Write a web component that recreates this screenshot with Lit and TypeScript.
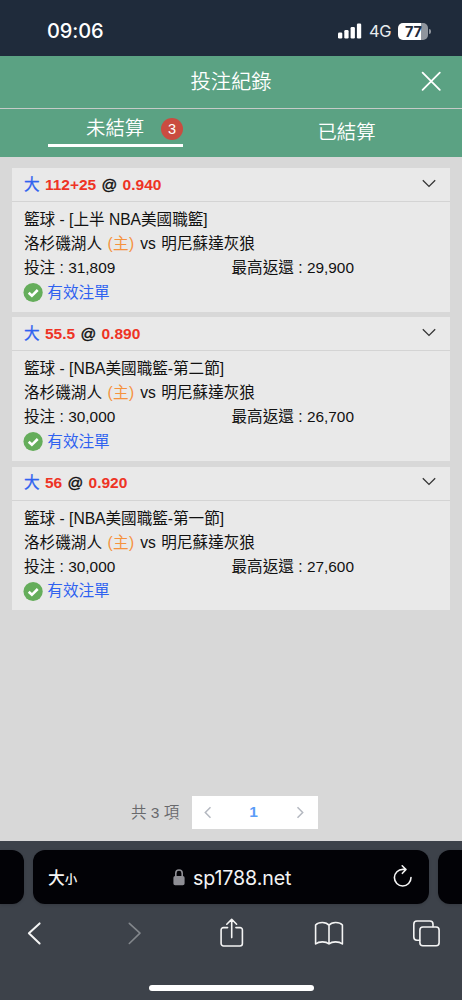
import { LitElement, html, css } from "lit";
import { customElement, property } from "lit/decorators.js";

interface Bet {
  line: string;
  odds: string;
  league: string;
  stake: string;
  payout: string;
}

const BETS: Bet[] = [
  { line: "112+25", odds: "0.940", league: "[上半 NBA美國職籃]", stake: "31,809", payout: "29,900" },
  { line: "55.5", odds: "0.890", league: "[NBA美國職籃-第二節]", stake: "30,000", payout: "26,700" },
  { line: "56", odds: "0.920", league: "[NBA美國職籃-第一節]", stake: "30,000", payout: "27,600" },
];

@customElement("status-bar")
class StatusBar extends LitElement {
  static styles = css`
    :host { display: flex; box-sizing: border-box; height: 55.5px; padding: 7px 31px 0 47px; align-items: center; justify-content: space-between; background: #1f2b3b; color: #fff; font-family: Inter, sans-serif; }
    .time { font-size: 20px; font-weight: 500; letter-spacing: -0.1px; line-height: 24px; }
    .right { display: flex; align-items: center; }
    .net { font-size: 16.4px; line-height: 20px; margin: 0 7px 0 7px; color: #e9ebee; letter-spacing: -0.2px; }
    .battery { display: flex; align-items: center; }
    .cell { width: 30px; height: 17px; border-radius: 5px; background: linear-gradient(90deg, #fff 77%, #8f959d 77%); color: #1f2b3b; font-size: 14.5px; font-weight: 700; line-height: 17.5px; text-align: center; letter-spacing: -0.2px; }
    .nub { width: 1.6px; height: 5px; margin-left: 1px; border-radius: 0 2px 2px 0; background: #8f959d; }
    svg { display: block; }
  `;
  render() {
    return html`
      <span class="time">09:06</span>
      <div class="right">
        <svg width="24" height="16" viewBox="0 0 24 16" fill="#fff">
          <rect x="0" y="9.5" width="4.3" height="6" rx="1.2" />
          <rect x="6.3" y="7" width="4.3" height="8.5" rx="1.2" />
          <rect x="12.6" y="4" width="4.3" height="11.5" rx="1.2" />
          <rect x="18.9" y="0.5" width="4.3" height="15" rx="1.2" />
        </svg>
        <span class="net">4G</span>
        <div class="battery"><div class="cell">77</div><div class="nub"></div></div>
      </div>
    `;
  }
}

@customElement("bet-card")
class BetCard extends LitElement {
  @property({ attribute: false }) bet!: Bet;
  static styles = css`
    :host { display: block; height: 143.5px; background: #e9e9e9; color: #111; font-size: 15.6px; }
    .head { display: flex; box-sizing: border-box; height: 34px; padding: 0 13px 0 12px; align-items: center; justify-content: space-between; border-bottom: 1.5px solid #d4d4d4; }
    .title { font-size: 15.5px; font-weight: 700; line-height: 24px; white-space: pre; word-spacing: 1px; }
    .pick { color: #2f62f0; font-size: 15.6px; font-weight: 400; -webkit-text-stroke: 0.3px #2f62f0; }
    .red { color: #ee3325; }
    .at { font-weight: 400; -webkit-text-stroke: 0.4px #111; }
    .body { padding: 6px 12px 0; }
    .row { display: flex; height: 24px; line-height: 24px; white-space: pre; }
    .match { word-spacing: 1.3px; }
    .home { color: #f5923e; letter-spacing: 0.3px; }
    .latin { font-size: 15.4px; }
    .half { width: 207.5px; }
    .valid { color: #2f62f0; align-items: center; gap: 4.3px; height: 25px; }
    svg { display: block; overflow: visible; }
  `;
  render() {
    const b = this.bet;
    return html`
      <div class="head">
        <div class="title"><span class="pick">大</span><span class="red"> ${b.line} </span><span class="at">@</span><span class="red"> ${b.odds}</span></div>
        <svg width="16" height="12" viewBox="0 0 16 12" fill="none" stroke="#333" stroke-width="1.3"><path d="M1.8 1.3 8 7.4 14.2 1.3" /></svg>
      </div>
      <div class="body">
        <div class="row">籃球 - ${b.league}</div>
        <div class="row match">洛杉磯湖人 <span class="home">(主)</span> vs 明尼蘇達灰狼</div>
        <div class="row"><span class="half">投注 : <span class="latin">${b.stake}</span></span><span>最高返還 : <span class="latin">${b.payout}</span></span></div>
        <div class="row valid">
          <svg width="19" height="19" viewBox="0 0 19 19"><circle cx="9.1" cy="9.5" r="9.6" fill="#65ad5b" /><path d="M4.7 9.7 7.9 12.8 13.7 7" fill="none" stroke="#fff" stroke-width="2.6" /></svg>
          <span>有效注單</span>
        </div>
      </div>
    `;
  }
}

@customElement("browser-bar")
class BrowserBar extends LitElement {
  static styles = css`
    :host { display: flex; flex-direction: column; box-sizing: border-box; height: 159px; padding-top: 9px; background: #3d424a; overflow: hidden; }
    .tabs { display: grid; grid-template-columns: 23.5px 395.5px 24px; gap: 9.5px; height: 54px; }
    .tab { background: #020206; border-radius: 12px; box-shadow: 0 1px 3px rgba(0, 0, 0, 0.15); }
    .first { border-radius: 0 12px 12px 0; }
    .last { border-radius: 12px 0 0 12px; }
    .address { display: grid; grid-template-columns: 140px 1fr 37px; align-items: center; color: #f4f4f4; }
    .size { padding: 1px 0 0 15px; font: 500 16.8px/24px "Noto Sans CJK TC", sans-serif; }
    .small { font-size: 12.5px; }
    .site { display: flex; align-items: center; gap: 8px; padding-top: 1px; font: 400 19.6px/24px Inter, sans-serif; letter-spacing: -0.1px; }
    .nav { display: flex; justify-content: space-between; padding: 9px 15px 0 14px; }
    .home { width: 164.5px; height: 6px; margin: 31.5px 0 0 149px; border-radius: 3px; background: #fff; }
    svg { display: block; fill: none; stroke: #f4f4f4; stroke-width: 1.6; stroke-linecap: round; stroke-linejoin: round; }
    .back { stroke-width: 2; }
    .dim { stroke: #83878c; }
    .lock { fill: #8e8e94; stroke: #8e8e94; }
    .shackle { stroke: #8e8e94; }
  `;
  render() {
    return html`
      <div class="tabs">
        <div class="tab first"></div>
        <div class="tab address">
          <span class="size">大<span class="small">小</span></span>
          <span class="site">
            <svg width="12" height="18" viewBox="0 0 12 18"><rect class="lock" x="1.2" y="7.7" width="9.6" height="7.7" rx="1" /><path class="shackle" d="M2.8 7.2V4.2a3.2 3.2 0 0 1 6.4 0V7.2" /></svg>
            sp1788.net
          </span>
          <svg width="22" height="26" viewBox="0 0 22 26"><path d="M10.9 5.4A8.3 8.3 0 1 0 19 13.6M10.6 5.4H13.9M10.2 1.8 14 5.5 10.4 9.3" /></svg>
        </div>
        <div class="tab last"></div>
      </div>
      <div class="nav">
        <svg class="back" width="40" height="40" viewBox="0 0 40 40"><path d="M25.6 10.4 14.9 20.2 25.6 30.5" /></svg>
        <svg class="dim" width="40" height="40" viewBox="0 0 40 40"><path d="M17.3 10.4 28 20.2 17.3 30.5" /></svg>
        <svg width="40" height="40" viewBox="0 0 40 40"><path d="M16.6 14.6H12.5a2.4 2.4 0 0 0-2.4 2.4V30.6a2.4 2.4 0 0 0 2.4 2.4H29a2.4 2.4 0 0 0 2.4-2.4V17a2.4 2.4 0 0 0-2.4-2.4H24.9M20.7 24.6V6.8M15.8 11.2 20.7 6.3 25.6 11.2" /></svg>
        <svg width="40" height="40" viewBox="0 0 40 40"><path d="M20 12.3C17.2 8.6 9.6 8.6 6.6 12.1V31C10 28.1 17 28.1 20 31C23 28.1 30 28.1 33.4 31V12.1C30.4 8.6 22.8 8.6 20 12.3V31" /></svg>
        <svg width="40" height="40" viewBox="0 0 40 40"><rect x="12.9" y="14" width="19.2" height="18.8" rx="3" /><path d="M12.6 27.2H10a3.2 3.2 0 0 1-3.2-3.2V11.2A3.2 3.2 0 0 1 10 8H22.8a3.2 3.2 0 0 1 3.2 3.2V13.6" /></svg>
      </div>
      <div class="home"></div>
    `;
  }
}

@customElement("app-root")
class AppRoot extends LitElement {
  static styles = css`
    :host { display: flex; flex-direction: column; width: 462px; height: 1000px; overflow: hidden; background: #d8d8d8; font-family: "Liberation Sans", "Noto Sans CJK TC", sans-serif; }
    .header { display: grid; grid-template-columns: 44px 1fr 44px; box-sizing: border-box; height: 53px; align-items: center; background: #5ba283; border-bottom: 1px solid #c5cbc8; }
    .name { grid-column: 2; text-align: center; color: #fff; font-size: 20.3px; font-weight: 350; line-height: 30px; }
    .tabs { display: grid; grid-template-columns: 1fr 1fr; height: 48px; background: #5ba283; color: #fff; font-size: 19.4px; font-weight: 350; line-height: 28px; }
    .open { display: flex; box-sizing: border-box; width: 135px; height: 38px; margin-left: 48px; padding: 5px 0 0 38px; justify-content: space-between; border-bottom: 3.5px solid #fff; }
    .badge { width: 22px; height: 22px; margin-top: 4px; border-radius: 50%; background: #ca4c40; font: 400 14.5px/22px "Liberation Sans", sans-serif; text-align: center; }
    .closed { padding-top: 9px; text-align: center; }
    .list { display: flex; flex-direction: column; gap: 5.8px; padding: 11.5px 12px 0; flex: 1; }
    .pager { display: flex; align-items: center; height: 33px; margin: 0 0 12px 131px; color: #68696c; font-size: 15.5px; }
    .total { width: 60.5px; padding-bottom: 3px; white-space: pre; font-weight: 350; }
    .pages { display: flex; width: 126px; height: 33px; box-sizing: border-box; padding: 0 14px 0 12px; align-items: center; justify-content: space-between; background: #fff; }
    .page { padding-bottom: 1px; color: #5b9df8; font-size: 15.5px; font-weight: 700; }
    svg { display: block; fill: none; }
  `;
  render() {
    return html`
      <status-bar></status-bar>
      <div class="header">
        <span class="name">投注紀錄</span>
        <svg width="26" height="26" viewBox="0 0 26 26" stroke="#fff" stroke-width="1.8" stroke-linecap="round"><path d="M4.6 3.7 21.8 20.9M21.8 3.7 4.6 20.9" /></svg>
      </div>
      <div class="tabs">
        <div class="open"><span>未結算</span><span class="badge">3</span></div>
        <div class="closed">已結算</div>
      </div>
      <div class="list">${BETS.map((bet) => html`<bet-card .bet=${bet}></bet-card>`)}</div>
      <div class="pager">
        <span class="total">共 3 項</span>
        <div class="pages">
          <svg width="8" height="14" viewBox="0 0 8 14" stroke="#b4b8c0" stroke-width="1.5"><path d="M6.5 1.3 1.3 6.5 6.5 11.7" /></svg>
          <span class="page">1</span>
          <svg width="8" height="14" viewBox="0 0 8 14" stroke="#b4b8c0" stroke-width="1.5"><path d="M1.5 1.3 6.7 6.5 1.5 11.7" /></svg>
        </div>
      </div>
      <browser-bar></browser-bar>
    `;
  }
}
